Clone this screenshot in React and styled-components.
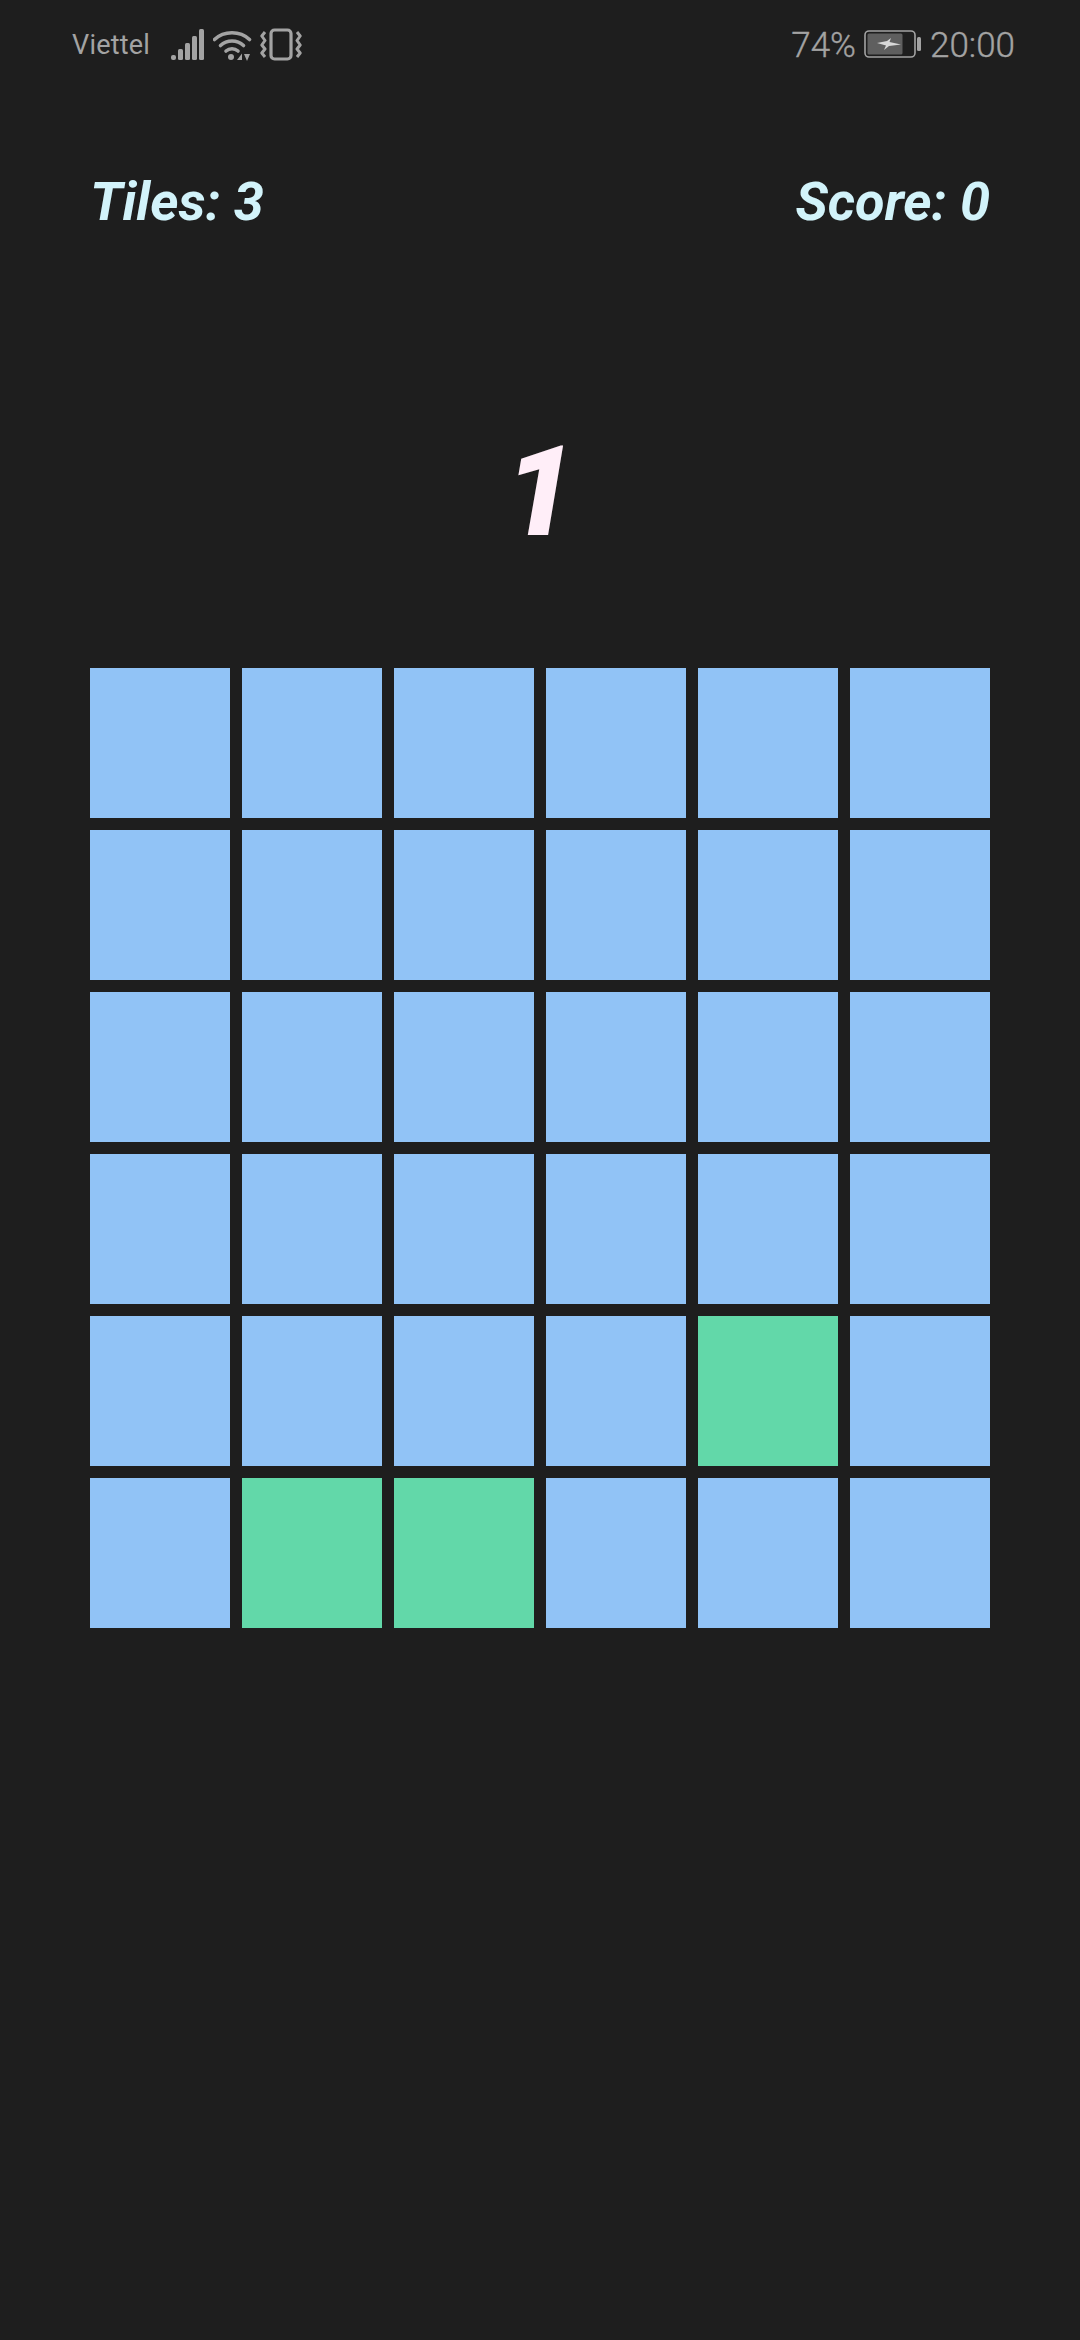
import React from "react";
import styled, { createGlobalStyle } from "styled-components";

const Global = createGlobalStyle`
  html, body { margin: 0; padding: 0; background: #1e1e1e; }
  #root { width: 1080px; height: 2340px; }
`;
const Page = styled.div`
  width: 1080px; height: 2340px; background: #1e1e1e; overflow: hidden;
  font-family: Roboto, "Liberation Sans", sans-serif;
  display: flex; flex-direction: column;
`;
const StatusBar = styled.div`
  height: 90px; padding: 0 65px 0 72px; box-sizing: border-box;
  display: flex; align-items: center; justify-content: space-between; color: #a3a3a3;
`;
const StatusGroup = styled.div`display: flex; align-items: center; gap: ${p => p.$gap}px;`;
const Carrier = styled.span`font-size: 27px; margin-right: 16px; letter-spacing: .2px;`;
const StatusText = styled.span`font-size: 35px; font-weight: 300; -webkit-text-stroke: .35px #a3a3a3;`;
const Header = styled.div`
  margin-top: 82px; padding: 0 90px; display: flex; justify-content: space-between;
  font-size: 54px; line-height: 60px; font-style: italic; font-weight: 700; color: #d2f3fa;
`;
const Counter = styled.div`
  margin-top: 160px; height: 200px; display: flex; align-items: center; justify-content: center;
  font-size: 126px; font-style: italic; font-weight: 900; color: #ffeef8;
`;
const Board = styled.div`
  margin: 76px 90px 0; display: grid; grid-template-columns: repeat(6, 140px);
  grid-auto-rows: 150px; gap: 12px;
`;
const Tile = styled.div`background: ${p => (p.$on ? "#62d8a9" : "#91c3f6")};`;

const Signal = () => (
  <svg width="37" height="34" viewBox="0 0 37 34" fill="#a3a3a3">
    <rect x="0" y="27" width="5" height="5" rx="2" />
    <rect x="7" y="21" width="5" height="11" rx="1.5" />
    <rect x="14" y="15" width="5" height="17" rx="1.5" />
    <rect x="21" y="8" width="5" height="24" rx="1.5" />
    <rect x="28" y="1" width="5" height="31" rx="1.5" />
  </svg>
);
const Wifi = () => (
  <svg width="42" height="34" viewBox="0 0 42 34" fill="none" stroke="#a3a3a3" strokeWidth="3.6" strokeLinecap="round">
    <path d="M1.5 11.5C11 2.5 27 2.5 36.5 11.5" />
    <path d="M7.5 17.5C14 11.5 24 11.5 30.5 17.5" />
    <path d="M13 23C16.5 20 21.5 20 25 23" />
    <circle cx="18" cy="29" r="3" fill="#a3a3a3" stroke="none" />
    <path d="M24 32L29 25.5V32ZM31 26H37L34 33Z" fill="#a3a3a3" stroke="none" />
  </svg>
);
const Vibrate = () => (
  <svg width="42" height="34" viewBox="0 0 42 34" fill="none" stroke="#a3a3a3" strokeWidth="3" strokeLinejoin="round">
    <rect x="11" y="2" width="20" height="29" rx="3.5" strokeWidth="3.2" />
    <path d="M5 4L1.8 8L5 12.5L1.8 17L5 21L1.8 25L5 29" />
    <path d="M37 4L40.2 8L37 12.5L40.2 17L37 21L40.2 25L37 29" />
  </svg>
);
const Battery = () => (
  <svg width="58" height="30" viewBox="0 0 58 30">
    <rect x="1" y="1" width="50" height="26" rx="4" fill="none" stroke="#a3a3a3" strokeWidth="1.6" />
    <rect x="3.5" y="3.5" width="35" height="21" rx="1.5" fill="#5f5f5f" />
    <rect x="53" y="7" width="4" height="14" rx="1.5" fill="#a3a3a3" />
    <path d="M13 13L23 11L27 8L25.5 12L37 14.5L25 16L20 20L22 15.5Z" fill="#d8d8d8" />
  </svg>
);

const green = new Set(["4-4", "5-1", "5-2"]);

export default function App() {
  return (
    <Page>
      <Global />
      <StatusBar>
        <StatusGroup $gap={5}>
          <Carrier>Viettel</Carrier>
          <Signal /><Wifi /><Vibrate />
        </StatusGroup>
        <StatusGroup $gap={8}>
          <StatusText>74%</StatusText>
          <Battery />
          <StatusText>20:00</StatusText>
        </StatusGroup>
      </StatusBar>
      <Header>
        <span>Tiles: 3</span>
        <span>Score: 0</span>
      </Header>
      <Counter>1</Counter>
      <Board>
        {Array.from({ length: 36 }, (_, i) => (
          <Tile key={i} $on={green.has(`${Math.floor(i / 6)}-${i % 6}`)} />
        ))}
      </Board>
    </Page>
  );
}
